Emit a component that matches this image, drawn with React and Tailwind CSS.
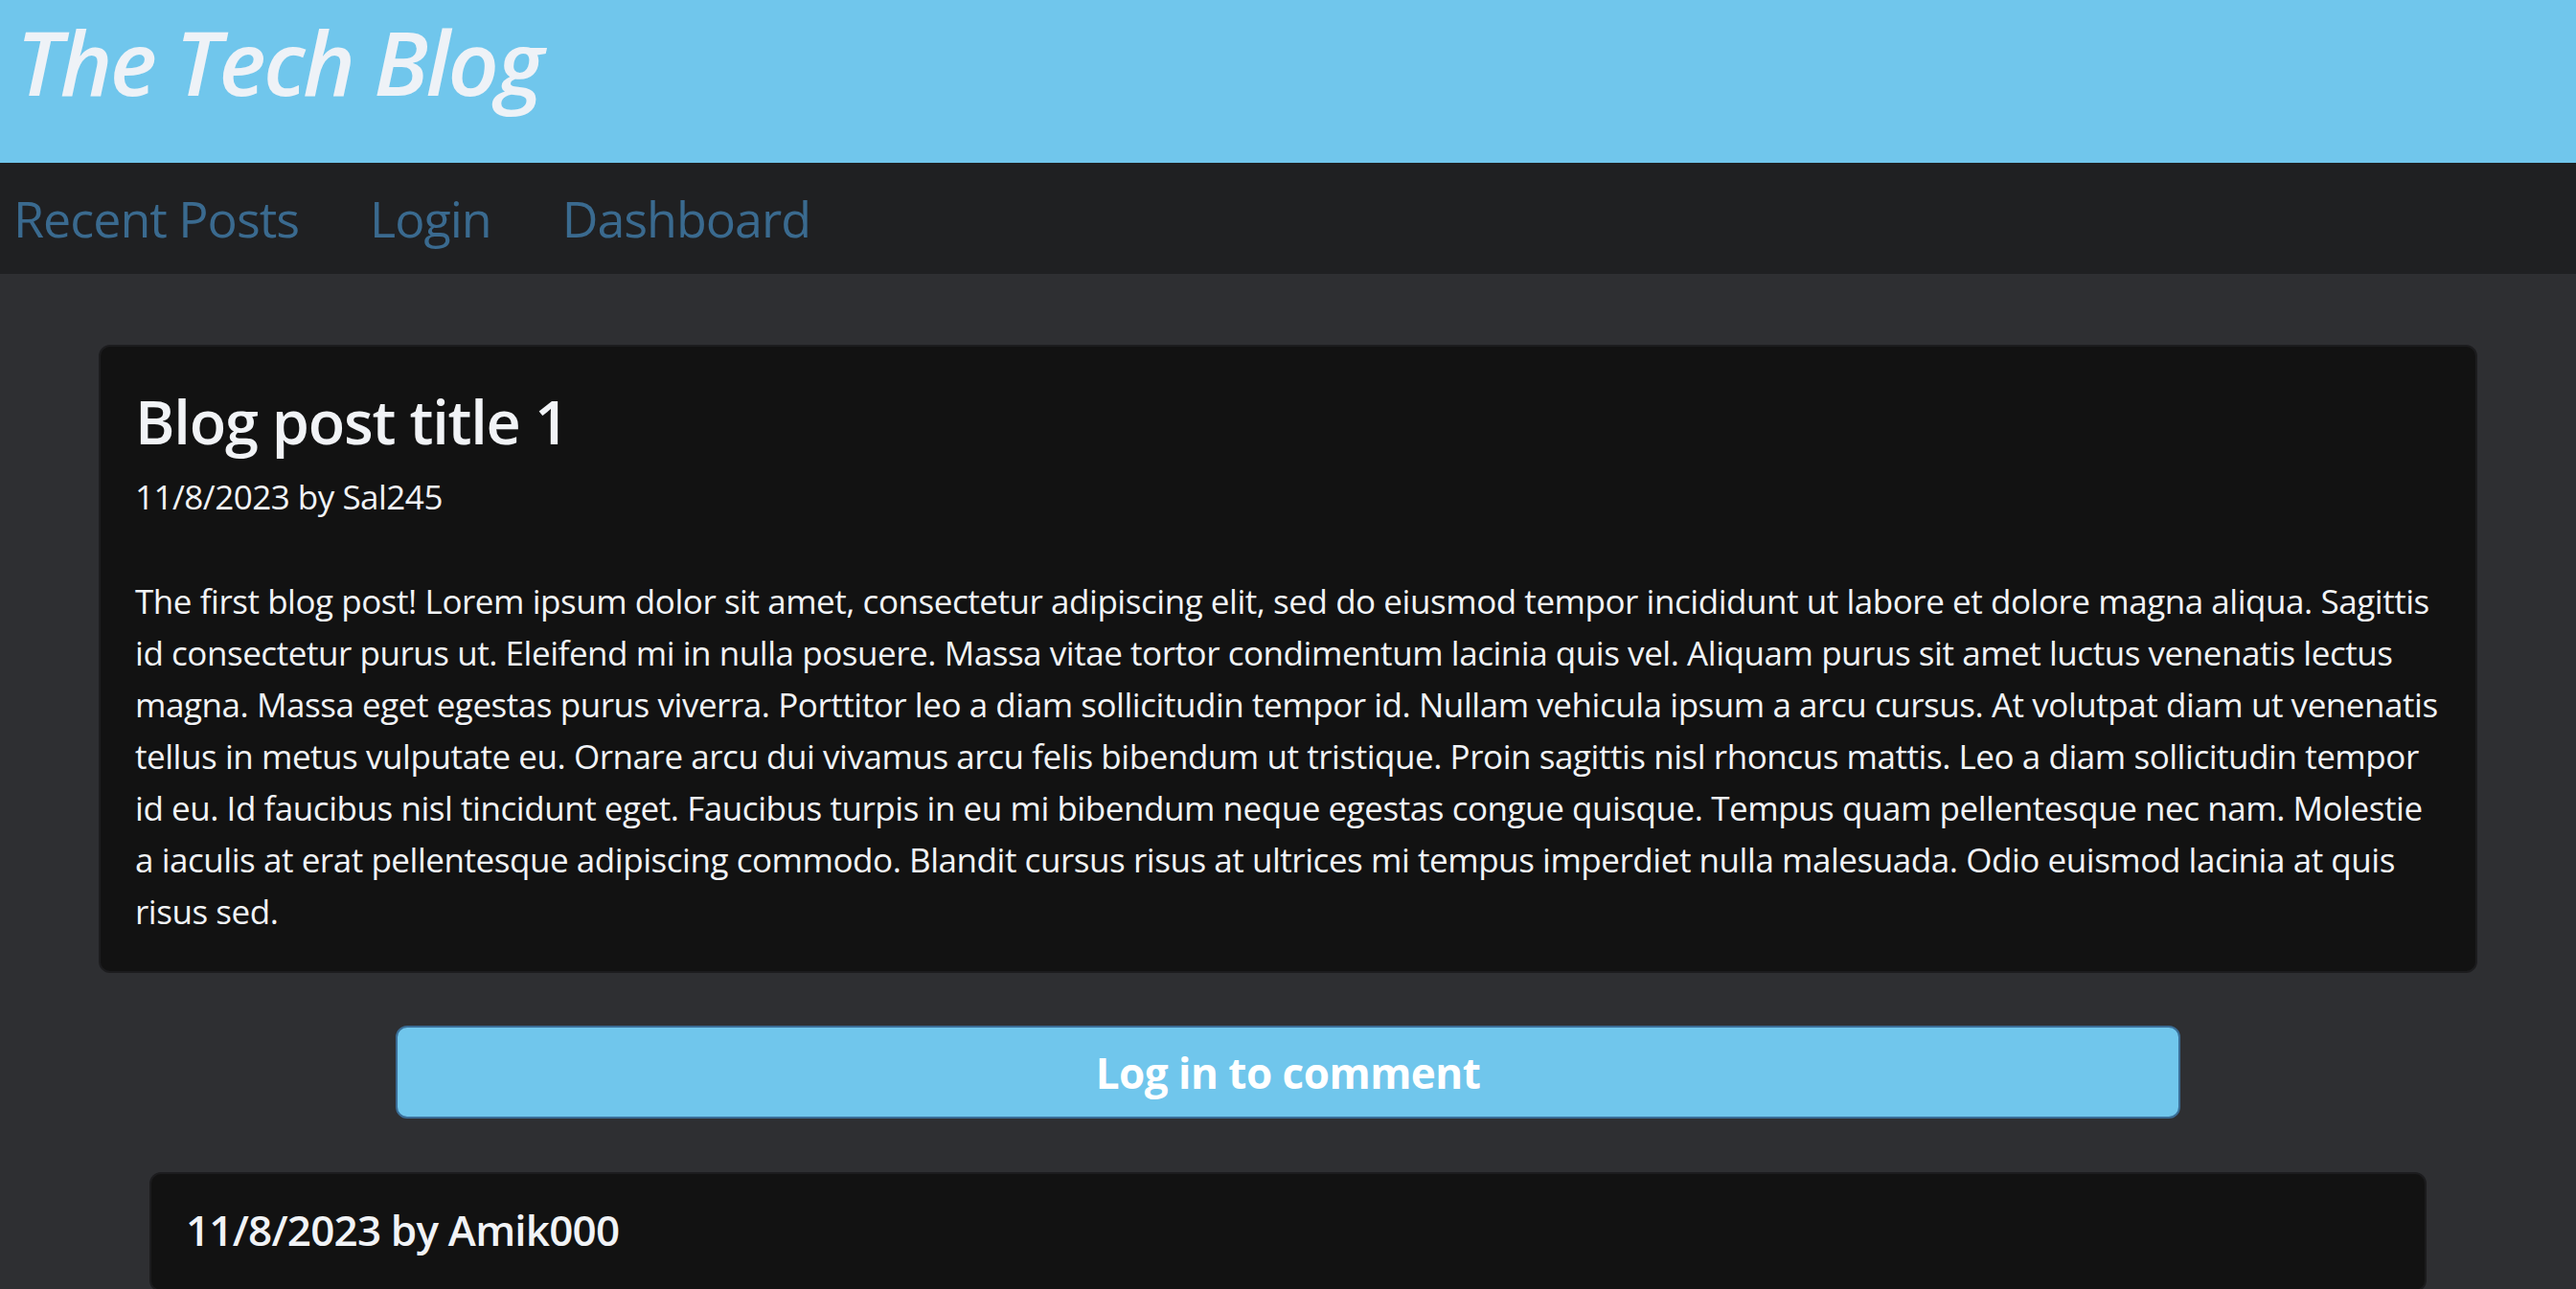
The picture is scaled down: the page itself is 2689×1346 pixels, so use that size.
export default function App() {
  return (
    <div className="min-h-screen bg-[#2e2f32] font-['Open_Sans',sans-serif] text-[#f1f3f6]">
      {/* Header */}
      <header className="h-[170px] bg-[#70c6ec] px-[17px]">
        <h1 className="pt-[4px] text-[93px] font-semibold italic leading-[1.3] tracking-[-2.5px] text-[#eef2f7]">
          The Tech Blog
        </h1>
      </header>

      {/* Nav */}
      <nav className="flex h-[116px] items-center gap-[74px] bg-[#1f2022] px-[14px] text-[52px] tracking-[-1px] text-[#3a6a8f]">
        <a href="#">Recent Posts</a>
        <a href="#">Login</a>
        <a href="#">Dashboard</a>
      </nav>

      <main className="mx-auto w-[2483px] pt-[74px] pb-[40px]">
        <article className="rounded-[12px] border-2 border-[#1c1c1e] bg-[#121212] px-[36px] pt-[40px] pb-[35px]">
          <h2 className="text-[63px] font-semibold leading-[1.2] tracking-[-1.2px]">Blog post title 1</h2>
          <p className="mt-[15px] text-[35px] leading-[1.5] tracking-[-0.5px]">11/8/2023 by Sal245</p>
          <p className="mt-[56px] text-[35px] leading-[54px] tracking-[-0.45px]">
            The first blog post! Lorem ipsum dolor sit amet, consectetur adipiscing elit, sed do eiusmod tempor incididunt ut labore et dolore magna aliqua. Sagittis id consectetur purus ut. Eleifend mi in nulla posuere. Massa vitae tortor condimentum lacinia quis vel. Aliquam purus sit amet luctus venenatis lectus magna. Massa eget egestas purus viverra. Porttitor leo a diam sollicitudin tempor id. Nullam vehicula ipsum a arcu cursus. At volutpat diam ut venenatis tellus in metus vulputate eu. Ornare arcu dui vivamus arcu felis bibendum ut tristique. Proin sagittis nisl rhoncus mattis. Leo a diam sollicitudin tempor id eu. Id faucibus nisl tincidunt eget. Faucibus turpis in eu mi bibendum neque egestas congue quisque. Tempus quam pellentesque nec nam. Molestie a iaculis at erat pellentesque adipiscing commodo. Blandit cursus risus at ultrices mi tempus imperdiet nulla malesuada. Odio euismod lacinia at quis risus sed.
          </p>
        </article>

        <div className="mt-[55px] flex justify-center">
          <button className="h-[97px] w-3/4 rounded-[12px] border-2 border-[#3a6d96] bg-[#70c6ec] text-[44px] font-bold tracking-[-0.5px] text-white">
            Log in to comment
          </button>
        </div>

        <div className="mx-[53px] mt-[56px] rounded-[12px] border-2 border-[#1c1c1e] bg-[#121212] px-[36px] pt-[32px] pb-[36px]">
          <p className="text-[44px] font-semibold leading-[1.2] tracking-[-0.8px]">11/8/2023 by Amik000</p>
        </div>
      </main>
    </div>
  );
}
